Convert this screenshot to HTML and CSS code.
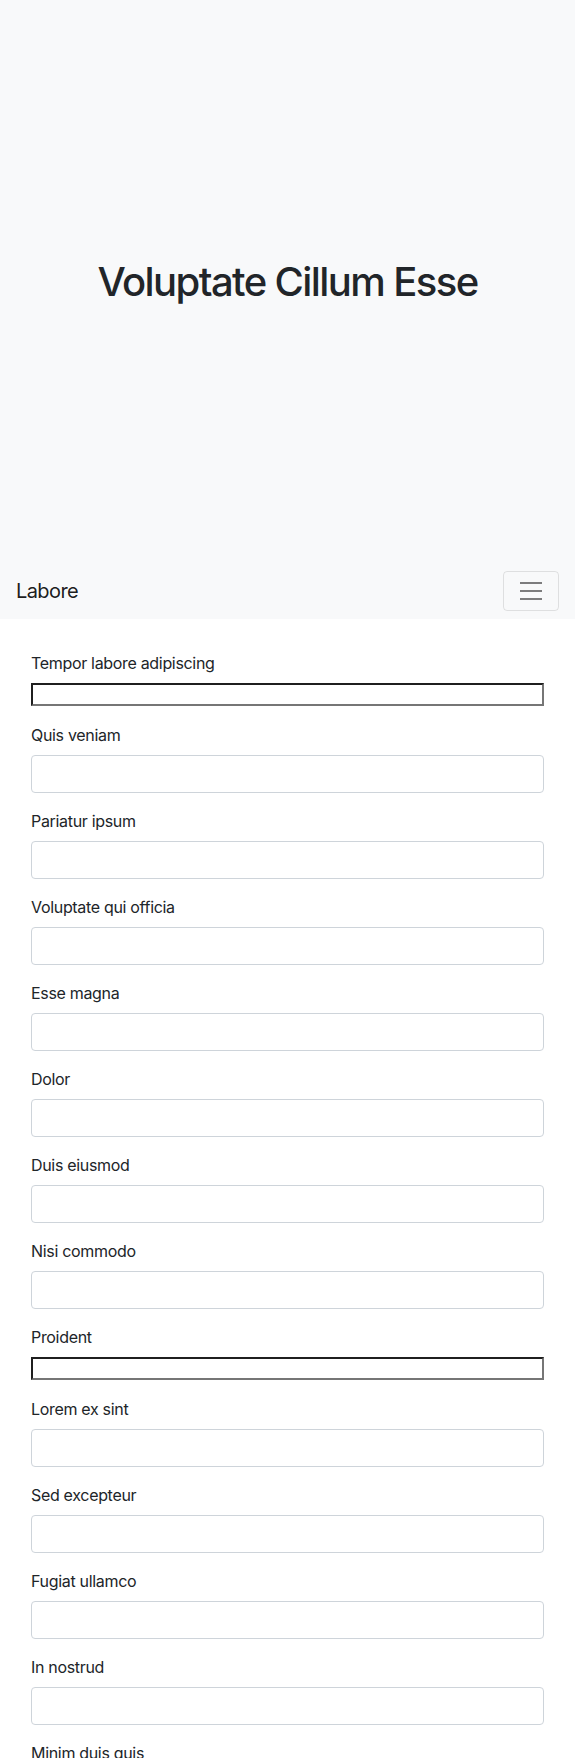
FILE: index.html
```html
<!DOCTYPE html>
<html lang="en">
<head>
<meta charset="utf-8">
<title>Labore</title>
<link rel="stylesheet" href="styles.css">
</head>
<body>
<header class="hero">
  <h1 class="hero-title">Voluptate Cillum Esse</h1>
</header>
<nav class="navbar">
  <a class="brand" href="#">Labore</a>
  <button class="toggler" type="button" aria-label="Toggle navigation">
    <svg class="toggler-icon" viewBox="0 0 30 30" width="30" height="30" aria-hidden="true">
      <path d="M4 7h22M4 15h22M4 23h22" stroke="rgba(0,0,0,0.5)" stroke-width="2" stroke-linecap="butt" stroke-miterlimit="10" fill="none"/>
    </svg>
  </button>
</nav>
<main class="content">
  <form class="form">
    <div class="group group-plain">
      <label class="label">Tempor labore adipiscing</label>
      <input class="plain-input" type="text">
    </div>
    <div class="group">
      <label class="label">Quis veniam</label>
      <input class="control" type="text">
    </div>
    <div class="group">
      <label class="label">Pariatur ipsum</label>
      <input class="control" type="text">
    </div>
    <div class="group">
      <label class="label">Voluptate qui officia</label>
      <input class="control" type="text">
    </div>
    <div class="group">
      <label class="label">Esse magna</label>
      <input class="control" type="text">
    </div>
    <div class="group">
      <label class="label">Dolor</label>
      <input class="control" type="text">
    </div>
    <div class="group">
      <label class="label">Duis eiusmod</label>
      <input class="control" type="text">
    </div>
    <div class="group">
      <label class="label">Nisi commodo</label>
      <input class="control" type="text">
    </div>
    <div class="group group-plain">
      <label class="label">Proident</label>
      <input class="plain-input" type="text">
    </div>
    <div class="group">
      <label class="label">Lorem ex sint</label>
      <input class="control" type="text">
    </div>
    <div class="group">
      <label class="label">Sed excepteur</label>
      <input class="control" type="text">
    </div>
    <div class="group">
      <label class="label">Fugiat ullamco</label>
      <input class="control" type="text">
    </div>
    <div class="group">
      <label class="label">In nostrud</label>
      <input class="control" type="text">
    </div>
    <div class="group">
      <label class="label">Minim duis quis</label>
      <input class="control" type="text">
    </div>
  </form>
</main>
</body>
</html>
```
FILE: styles.css
```css
* {
  box-sizing: border-box;
}
html, body {
  margin: 0;
  padding: 0;
}
body {
  font-family: Inter, Roboto, "Liberation Sans", Arial, sans-serif;
  font-size: 16px;
  line-height: 1.5;
  color: #212529;
  background: #fff;
}
.hero {
  height: 563px;
  background: #f8f9fa;
  display: flex;
  align-items: center;
  justify-content: center;
}
.hero-title {
  margin: 0;
  font-size: 40px;
  font-weight: 500;
  line-height: 1.2;
  letter-spacing: -0.04em;
  color: #212529;
}
.navbar {
  background: #f8f9fa;
  display: flex;
  align-items: center;
  justify-content: space-between;
  padding: 8px 16px;
}
.brand {
  font-size: 20px;
  line-height: 30px;
  padding: 5px 0;
  letter-spacing: -0.03em;
  color: rgba(0, 0, 0, 0.9);
  text-decoration: none;
}
.toggler {
  display: flex;
  align-items: center;
  justify-content: center;
  width: 56px;
  height: 40px;
  padding: 4px 12px;
  background: transparent;
  border: 1px solid rgba(0, 0, 0, 0.1);
  border-radius: 4px;
}
.toggler-icon {
  display: block;
  width: 30px;
  height: 30px;
}
.content {
  padding: 32px 31px 40px;
}
.form {
  display: flex;
  flex-direction: column;
}
.group {
  margin-bottom: 16px;
}
.group-plain {
  margin-bottom: 17px;
}
.label {
  display: block;
  margin-bottom: 8px;
  line-height: 24px;
  letter-spacing: -0.02em;
}
.plain-input {
  display: block;
  width: 100%;
  height: 23px;
  margin: 0;
  padding: 1px 2px;
  border-width: 2px;
  border-style: solid;
  border-top-color: #1f1f1f;
  border-left-color: #1f1f1f;
  border-right-color: #767676;
  border-bottom-color: #767676;
  background: #fff;
  font: 13.33px Arial, sans-serif;
}
.control {
  display: block;
  width: 100%;
  height: 38px;
  margin: 0;
  padding: 6px 12px;
  font: inherit;
  color: #495057;
  background: #fff;
  border: 1px solid #ced4da;
  border-radius: 4px;
}
```
